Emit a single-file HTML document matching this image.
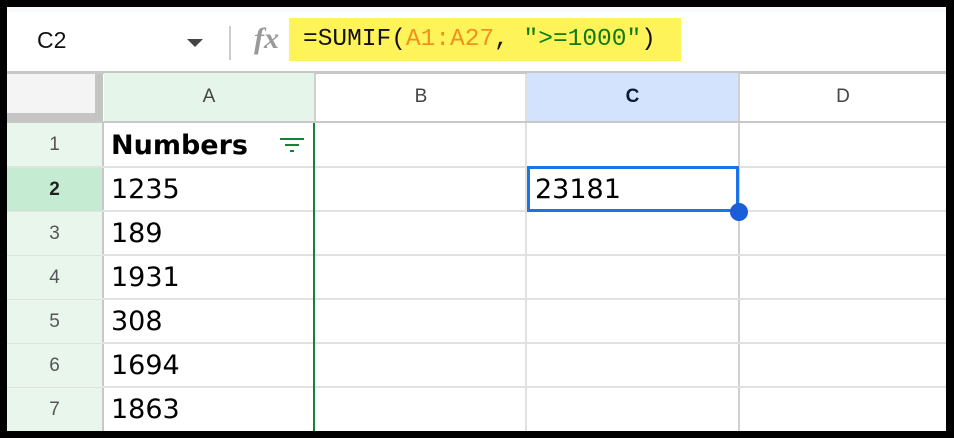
<!DOCTYPE html>
<html><head><style>
body{margin:0;width:954px;height:438px;background:#000;position:relative;overflow:hidden;font-family:"Liberation Sans",sans-serif}
.a{position:absolute}
.hl{position:absolute;height:2px;background:#e1e1e1}
.vl{position:absolute;width:2px;background:#e1e1e1}
.rn{position:absolute;left:7px;width:95px;height:43px;background:#e8f6ec;color:#555;font-size:19px;text-align:center;line-height:43px}
.cell{position:absolute;left:111px;font-family:"DejaVu Sans",sans-serif;font-size:27px;color:#000;line-height:43px}
.ch{position:absolute;top:73px;height:48px;line-height:48px;text-align:center;font-size:19px;color:#444}
</style></head><body>
<div class="a" style="left:7px;top:7px;width:939px;height:424px;background:#fff"></div>
<div class="a" style="left:7px;top:7px;width:939px;height:5px;background:#f8f9fa"></div>
<div class="a" style="left:37px;top:27px;font-size:23px;color:#111">C2</div>
<div class="a" style="left:187px;top:39px;width:0;height:0;border-left:8px solid transparent;border-right:8px solid transparent;border-top:8px solid #444"></div>
<div class="a" style="left:229px;top:26px;width:2px;height:34px;background:#ccc"></div>
<div class="a" style="left:254px;top:22px;font-family:'Liberation Serif',serif;font-style:italic;font-weight:bold;font-size:30px;color:#999">fx</div>
<div class="a" style="left:289px;top:18px;width:392px;height:43px;background:#fff35a"></div>
<div class="a" style="left:303px;top:26px;font-family:'Liberation Mono',monospace;font-size:24.5px;color:#111;white-space:pre">=SUMIF(<span style="color:#f0901e">A1:A27</span>, <span style="color:#107a10">"&gt;=1000"</span>)</div>
<div class="a" style="left:7px;top:71px;width:939px;height:3px;background:#c8c8c8"></div>
<div class="a" style="left:7px;top:74px;width:88px;height:39px;background:#f4f4f4"></div>
<div class="a" style="left:95px;top:74px;width:8px;height:48px;background:#c4c4c4"></div>
<div class="a" style="left:7px;top:113px;width:96px;height:9px;background:#c4c4c4"></div>
<div class="ch" style="left:104px;width:210px;background:#e6f5ea">A</div>
<div class="ch" style="left:316px;width:210px">B</div>
<div class="ch" style="left:527px;width:211px;background:#d3e3fd;color:#0b1a3a;font-weight:bold">C</div>
<div class="ch" style="left:740px;width:206px">D</div>
<div class="vl" style="left:314px;top:74px;height:48px;background:#d0d0d0"></div>
<div class="vl" style="left:525px;top:74px;height:357px"></div>
<div class="vl" style="left:738px;top:74px;height:357px;background:#d0d0d0"></div>
<div class="a" style="left:7px;top:121px;width:939px;height:2px;background:#c8c8c8"></div>
<div class="vl" style="left:102px;top:123px;height:308px;background:#c8c8c8"></div>
<div class="hl" style="left:7px;top:166px;width:939px"></div>
<div class="hl" style="left:7px;top:210px;width:939px"></div>
<div class="hl" style="left:7px;top:254px;width:939px"></div>
<div class="hl" style="left:7px;top:298px;width:939px"></div>
<div class="hl" style="left:7px;top:342px;width:939px"></div>
<div class="hl" style="left:7px;top:386px;width:939px"></div>
<div class="rn" style="top:123px">1</div>
<div class="rn" style="top:168px;background:#c5ecd3;color:#222;font-weight:bold">2</div>
<div class="rn" style="top:212px">3</div>
<div class="rn" style="top:256px">4</div>
<div class="rn" style="top:300px">5</div>
<div class="rn" style="top:344px">6</div>
<div class="rn" style="top:388px">7</div>
<div class="cell" style="top:124px;font-weight:bold;font-size:27px">Numbers</div>
<svg class="a" style="left:279px;top:137px" width="26" height="20"><rect x="1" y="1" width="24" height="2" fill="#188038"/><rect x="6" y="7" width="14" height="2" fill="#188038"/><rect x="11" y="13" width="4" height="2" fill="#188038"/></svg>
<div class="cell" style="top:168px">1235</div>
<div class="cell" style="top:212px">189</div>
<div class="cell" style="top:256px">1931</div>
<div class="cell" style="top:300px">308</div>
<div class="cell" style="top:344px">1694</div>
<div class="cell" style="top:388px">1863</div>
<div class="a" style="left:313px;top:123px;width:2px;height:308px;background:#188038"></div>
<div class="a" style="left:527px;top:166px;width:206px;height:40px;border:3px solid #1a73e8"></div>
<div class="a" style="left:535px;top:168px;font-family:'DejaVu Sans',sans-serif;font-size:27px;line-height:43px">23181</div>
<div class="a" style="left:730px;top:203px;width:18px;height:18px;border-radius:50%;background:#1a5fd8"></div>
</body></html>
